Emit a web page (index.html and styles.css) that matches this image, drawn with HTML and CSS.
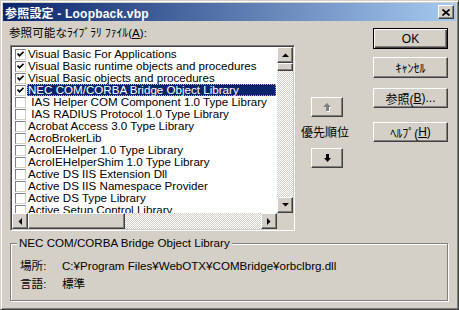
FILE: index.html
```html
<!DOCTYPE html>
<html lang="ja">
<head>
  <meta charset="UTF-8" />
  <title>参照設定 - Loopback.vbp</title>
  <link rel="stylesheet" href="styles.css">
</head>
<body>
  <div class="window">
    <div class="titlebar">
      <span class="title">参照設定 - Loopback.vbp</span>
      <span class="btn close-btn">
        <svg width="8" height="7" viewBox="0 0 8 7"><path d="M0.5 0.5 L7.5 6.5 M7.5 0.5 L0.5 6.5" stroke="#000" stroke-width="1.6"/></svg>
      </span>
    </div>

    <div class="client">
      <div class="top">
        <div class="left">
          <div class="label">参照可能なﾗｲﾌﾞﾗﾘ ﾌｧｲﾙ(<u>A</u>):</div>
          <div class="listbox">
            <div class="items">
              <div class="row"><span class="check on"><svg width="7" height="7" viewBox="0 0 7 7"><path d="M0.5 2.5 L2.5 4.8 L6.5 0.8" stroke="#000" stroke-width="1.8" fill="none"/></svg></span><span class="text">Visual Basic For Applications</span></div>
              <div class="row"><span class="check on"><svg width="7" height="7" viewBox="0 0 7 7"><path d="M0.5 2.5 L2.5 4.8 L6.5 0.8" stroke="#000" stroke-width="1.8" fill="none"/></svg></span><span class="text">Visual Basic runtime objects and procedures</span></div>
              <div class="row"><span class="check on"><svg width="7" height="7" viewBox="0 0 7 7"><path d="M0.5 2.5 L2.5 4.8 L6.5 0.8" stroke="#000" stroke-width="1.8" fill="none"/></svg></span><span class="text">Visual Basic objects and procedures</span></div>
              <div class="row selected"><span class="check on"><svg width="7" height="7" viewBox="0 0 7 7"><path d="M0.5 2.5 L2.5 4.8 L6.5 0.8" stroke="#000" stroke-width="1.8" fill="none"/></svg></span><span class="text">NEC COM/CORBA Bridge Object Library</span></div>
              <div class="row"><span class="check"></span><span class="text"> IAS Helper COM Component 1.0 Type Library</span></div>
              <div class="row"><span class="check"></span><span class="text"> IAS RADIUS Protocol 1.0 Type Library</span></div>
              <div class="row"><span class="check"></span><span class="text">Acrobat Access 3.0 Type Library</span></div>
              <div class="row"><span class="check"></span><span class="text">AcroBrokerLib</span></div>
              <div class="row"><span class="check"></span><span class="text">AcroIEHelper 1.0 Type Library</span></div>
              <div class="row"><span class="check"></span><span class="text">AcroIEHelperShim 1.0 Type Library</span></div>
              <div class="row"><span class="check"></span><span class="text">Active DS IIS Extension Dll</span></div>
              <div class="row"><span class="check"></span><span class="text">Active DS IIS Namespace Provider</span></div>
              <div class="row"><span class="check"></span><span class="text">Active DS Type Library</span></div>
              <div class="row"><span class="check"></span><span class="text">Active Setup Control Library</span></div>
            </div>

            <div class="vscroll">
              <span class="btn sbtn"><svg width="7" height="4" viewBox="0 0 7 4"><polygon points="0,4 3.5,0.5 7,4" fill="#000"/></svg></span>
              <span class="btn vthumb"></span>
              <span class="track"></span>
              <span class="btn sbtn"><svg width="7" height="4" viewBox="0 0 7 4"><polygon points="0,0 7,0 3.5,3.5" fill="#000"/></svg></span>
            </div>
            <div class="hscroll">
              <span class="btn sbtn"><svg width="4" height="7" viewBox="0 0 4 7"><polygon points="4,0 4,7 0.5,3.5" fill="#000"/></svg></span>
              <span class="btn hthumb"></span>
              <span class="track"></span>
              <span class="btn sbtn"><svg width="4" height="7" viewBox="0 0 4 7"><polygon points="0,0 0,7 3.5,3.5" fill="#000"/></svg></span>
            </div>
            <div class="corner"></div>
          </div>
        </div>

        <div class="priority">
          <span class="btn pbtn">
            <svg width="9" height="9" viewBox="0 0 9 9">
              <polygon points="5,1 9,5 7,5 7,9 4,9 4,5 2,5" fill="#fff"/>
              <polygon points="4,0 8,4 6,4 6,8 3,8 3,4 0,4" fill="#808080"/>
            </svg>
          </span>
          <div class="plabel">優先順位</div>
          <span class="btn pbtn">
            <svg width="9" height="9" viewBox="0 0 9 9"><polygon points="3,0 6,0 6,4 8,4 4.5,8 1,4 3,4" fill="#000"/></svg>
          </span>
        </div>

        <div class="buttons">
          <span class="btn cmd default">OK</span>
          <span class="btn cmd cancel">ｷｬﾝｾﾙ</span>
          <span class="btn cmd browse">参照(<u>B</u>)...</span>
          <span class="btn cmd help">ﾍﾙﾌﾟ(<u>H</u>)</span>
        </div>
      </div>

      <div class="group">
        <div class="legend">NEC COM/CORBA Bridge Object Library</div>
        <div class="info"><span class="key">場所:</span><span>C:¥Program Files¥WebOTX¥COMBridge¥orbclbrg.dll</span></div>
        <div class="info"><span class="key">言語:</span><span>標準</span></div>
      </div>
    </div>
  </div>
</body>
</html>
```

FILE: styles.css
```css
body {
  margin: 0;
  background-color: #d4d0c8;
  font-family: "Liberation Sans", "Noto Sans CJK JP", sans-serif;
  font-size: 11.6px;
  color: #000;
}

.window {
  width: 459px;
  height: 310px;
  box-sizing: border-box;
  background-color: #d4d0c8;
  border: 1px solid;
  border-color: #d4d0c8 #404040 #404040 #d4d0c8;
  box-shadow: inset 1px 1px 0 #fff, inset -1px -1px 0 #808080;
  padding: 2px;
}

.titlebar {
  height: 18px;
  display: flex;
  align-items: center;
  justify-content: space-between;
  background: linear-gradient(to right, #0a246a, #a6caf0);
  padding: 0 2px;
}

.title {
  color: #fff;
  font-weight: bold;
  font-size: 12px;
  letter-spacing: 0.2px;
}

/* classic 3d button */
.btn {
  box-sizing: border-box;
  display: flex;
  align-items: center;
  justify-content: center;
  background-color: #d4d0c8;
  border: 1px solid;
  border-color: #fff #404040 #404040 #fff;
  box-shadow: inset -1px -1px 0 #808080;
}

.close-btn {
  width: 16px;
  height: 14px;
}

.client {
  padding: 0 0 0 6px;
}

.top {
  display: flex;
}

.left {
  width: 286px;
}

.label {
  margin-top: 5px;
  line-height: 14px;
  height: 14px;
}

.listbox {
  margin: 5px 0 0 1px;
  width: 285px;
  height: 186px;
  box-sizing: border-box;
  border: 1px solid;
  border-color: #808080 #fff #fff #808080;
  box-shadow: inset 1px 1px 0 #404040, inset -1px -1px 0 #d4d0c8;
  padding: 1px;
  display: grid;
  grid-template-columns: 1fr 16px;
  grid-template-rows: 1fr 16px;
  background-color: #fff;
}

.items {
  overflow: hidden;
  padding-top: 1px;
}

.row {
  height: 12px;
  display: flex;
  align-items: center;
  white-space: pre;
}

.check {
  width: 11px;
  height: 11px;
  box-sizing: border-box;
  margin: 0 1px 0 3px;
  border: 1px solid;
  border-color: #808080 #d4d0c8 #d4d0c8 #808080;
  background-color: #fff;
  display: flex;
  align-items: center;
  justify-content: center;
  flex-shrink: 0;
}

.text {
  flex: 1;
  height: 12px;
  line-height: 12px;
  padding-left: 1px;
  margin-right: 1px;
  box-sizing: border-box;
}

.selected .text {
  background-color: #0a246a;
  color: #fff;
  outline: 1px dotted #c8b070;
  outline-offset: -1px;
}

.vscroll {
  display: flex;
  flex-direction: column;
}

.hscroll {
  display: flex;
}

.sbtn {
  width: 16px;
  height: 16px;
  flex-shrink: 0;
}

.vthumb {
  height: 8px;
}

.hthumb {
  width: 97px;
}

.track {
  flex: 1;
  background: repeating-conic-gradient(#d4d0c8 0 25%, #fff 0 50%) 0 0 / 2px 2px;
}

.corner {
  background-color: #d4d0c8;
}

.priority {
  width: 50px;
  margin-left: 5px;
  padding-top: 76px;
  display: flex;
  flex-direction: column;
  align-items: center;
}

.pbtn {
  width: 32px;
  height: 20px;
  margin-left: 4px;
}

.plabel {
  margin: 9px 0 8px;
  font-size: 12px;
  line-height: 14px;
  white-space: nowrap;
}

.buttons {
  margin-left: 23px;
  padding-top: 7px;
  display: flex;
  flex-direction: column;
}

.cmd {
  width: 75px;
  height: 21px;
  font-size: 12px;
}

.cmd.default {
  border: 1px solid #000;
  box-shadow: inset 1px 1px 0 #fff, inset -1px -1px 0 #404040, inset -2px -2px 0 #808080;
}

.cancel {
  margin-top: 8px;
}

.browse {
  margin-top: 10px;
  height: 20px;
}

.help {
  margin-top: 14px;
  height: 20px;
}

.group {
  margin: 12px 0 0 1px;
  width: 438px;
  height: 58px;
  box-sizing: border-box;
  border: 1px solid #808080;
  box-shadow: inset 1px 1px 0 #fff, 1px 1px 0 #fff;
}

.legend {
  display: inline-block;
  margin: -8px 0 0 6px;
  padding: 0 2px;
  height: 14px;
  line-height: 14px;
  background-color: #d4d0c8;
  vertical-align: top;
}

.info {
  display: flex;
  height: 18px;
  line-height: 18px;
  padding-left: 9px;
}

.info:first-of-type {
  margin-top: 5px;
}

.key {
  width: 42px;
}
```
